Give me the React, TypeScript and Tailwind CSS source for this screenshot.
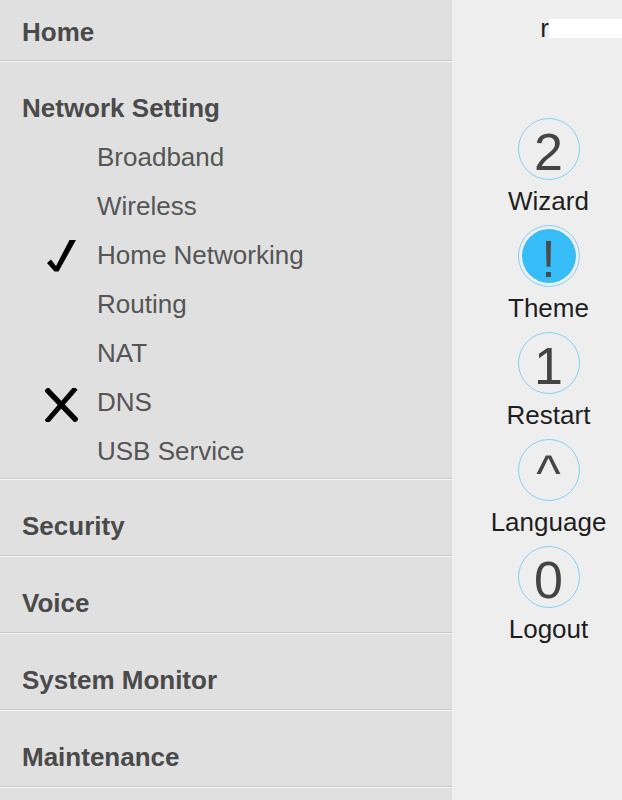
import React from "react";

const font = { fontFamily: '"Liberation Sans", Arial, sans-serif' };

const subItems = [
  { label: "Broadband", mark: "" },
  { label: "Wireless", mark: "" },
  { label: "Home Networking", mark: "check" },
  { label: "Routing", mark: "" },
  { label: "NAT", mark: "" },
  { label: "DNS", mark: "cross" },
  { label: "USB Service", mark: "" },
];

const bottomSections = ["Security", "Voice", "System Monitor", "Maintenance"];

const tools = [
  { glyph: "2", label: "Wizard", active: false },
  { glyph: "!", label: "Theme", active: true },
  { glyph: "1", label: "Restart", active: false },
  { glyph: "^", label: "Language", active: false },
  { glyph: "0", label: "Logout", active: false },
];

function Divider() {
  return (
    <div>
      <div className="h-px bg-[#c9c9c9]" />
      <div className="h-px bg-[#f6f6f6]" />
    </div>
  );
}

function CheckMark() {
  return (
    <svg width="30" height="33" viewBox="0 0 30 33">
      <polygon points="1,24 5,20.5 10,27 23.5,1 30,1 12.5,32.5 8.5,32.5" fill="#000" />
    </svg>
  );
}

function CrossMark() {
  return (
    <svg width="33" height="34" viewBox="0 0 33 34">
      <path d="M3 3 L30 31" stroke="#000" strokeWidth="5.5" strokeLinecap="square" />
      <path d="M29 2 L3 32" stroke="#000" strokeWidth="5" strokeLinecap="square" />
    </svg>
  );
}

function ToolButton({ glyph, label, active }: { glyph: string; label: string; active: boolean }) {
  return (
    <div className="flex flex-col items-center">
      {active ? (
        <div className="w-[62px] h-[62px] rounded-full border border-[#7fd3f7] p-[3px]">
          <div className="w-full h-full rounded-full bg-[#36bdf8] flex items-center justify-center pt-[5px] text-[52px] leading-none text-[#4a4a4a]">
            {glyph}
          </div>
        </div>
      ) : (
        <div className="w-[62px] h-[62px] rounded-full border border-[#7fd3f7] flex items-center justify-center pt-[5px] text-[52px] leading-none text-[#444]">
          {glyph}
        </div>
      )}
      <p className="mt-[6px] text-[26px] leading-[30px] text-[#1e1e1e]">{label}</p>
    </div>
  );
}

function App() {
  return (
    <div className="flex w-[622px] h-[800px] overflow-hidden bg-[#eeeeee]" style={font}>
      <div className="w-[452px] shrink-0 bg-[#e0e0e0]">
        <div className="pl-[22px] pt-[17px] pb-[13px] text-[26px] leading-[30px] font-bold text-[#4a4a4a]">
          Home
        </div>
        <Divider />
        <div className="pt-[31px] pb-[2px]">
          <p className="pl-[22px] text-[26px] leading-[30px] font-bold text-[#4a4a4a]">
            Network Setting
          </p>
          <ul className="mt-[10px]">
            {subItems.map((item) => (
              <li key={item.label} className="flex items-center h-[49px]">
                <div className="w-[97px] shrink-0 pl-[46px] flex items-center">
                  {item.mark === "check" && <CheckMark />}
                  {item.mark === "cross" && (
                    <div className="-ml-[1px] mt-[4px]">
                      <CrossMark />
                    </div>
                  )}
                </div>
                <span className="text-[26px] leading-[49px] text-[#555]">{item.label}</span>
              </li>
            ))}
          </ul>
        </div>
        {bottomSections.map((name) => (
          <div key={name}>
            <Divider />
            <div className="pl-[22px] pt-[31px] pb-[14px] text-[26px] leading-[30px] font-bold text-[#4a4a4a]">
              {name}
            </div>
          </div>
        ))}
        <Divider />
      </div>
      <div className="flex-1 flex flex-col">
        <div className="mt-[19px] flex items-start justify-end">
          <span className="text-[26px] leading-[19px] text-[#222]">r</span>
          <div className="w-[73px] h-[19px] bg-white" />
        </div>
        <div className="mt-[80px] pl-[23px] flex flex-col gap-[9px]">
          {tools.map((t) => (
            <ToolButton key={t.label} glyph={t.glyph} label={t.label} active={t.active} />
          ))}
        </div>
      </div>
    </div>
  );
}

export default App;
